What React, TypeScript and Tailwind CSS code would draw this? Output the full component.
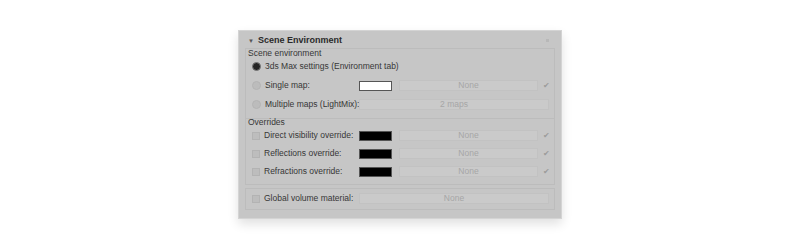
const font = { fontFamily: '"Liberation Sans", Arial, sans-serif' }

function Radio({ on }: { on?: boolean }) {
  return (
    <span
      className={`w-[9px] h-[9px] rounded-full shrink-0 border ${
        on ? 'bg-[#262626] border-[#7a7a7a]' : 'bg-[#bcbcbc] border-[#b4b4b4]'
      }`}
    />
  )
}

function Check() {
  return <span className="w-[8px] h-[8px] shrink-0 bg-[#bdbdbd] border border-[#b3b3b3]" />
}

function MapButton({ label, wide }: { label: string; wide?: boolean }) {
  return (
    <div
      className={`h-[11px] flex items-center justify-center bg-[#cacaca] border border-[#c2c2c2] text-[#a6a6a6] ${
        wide ? 'w-[190px]' : 'w-[139px]'
      }`}
    >
      {label}
    </div>
  )
}

function Tick() {
  return <span className="ml-[5px] text-[8px] text-[#9c9c9c] leading-none">✔</span>
}

function Row({
  control,
  label,
  swatch,
  button,
  wide,
  tall,
}: {
  control: React.ReactNode
  label: string
  swatch?: 'white' | 'black'
  button: string
  wide?: boolean
  tall?: boolean
}) {
  return (
    <div className={`flex items-center shrink-0 ${tall ? 'h-[20px]' : 'h-[18px]'}`}>
      <div className="w-[107px] flex items-center gap-[4px] shrink-0">
        {control}
        <span className="text-[#363636] whitespace-nowrap">{label}</span>
      </div>
      {swatch && (
        <span
          className={`w-[33px] h-[10px] mr-[7px] shrink-0 border border-[#555] ${
            swatch === 'white' ? 'bg-white' : 'bg-black'
          }`}
        />
      )}
      <MapButton label={button} wide={wide} />
      {!wide && <Tick />}
    </div>
  )
}

export default function App() {
  return (
    <div className="w-[800px] h-[248px] bg-white flex items-center justify-center" style={font}>
      <div className="w-[324px] h-[189px] bg-[#c6c6c6] border border-[#d4d4d4] shadow-[0_5px_10px_rgba(0,0,0,0.12)] text-[8.5px] leading-none flex flex-col px-[6px]">
        {/* Header */}
        <div className="h-[17px] flex items-center pt-[3px] shrink-0">
          <span className="ml-[3px] text-[6px] text-[#555]">▼</span>
          <span className="ml-[4px] font-bold text-[9px] text-[#2a2a2a]">Scene Environment</span>
          <span className="ml-auto mr-[6px] w-[3px] h-[3px] bg-[#b8b8b8]" />
        </div>

        {/* Scene environment group */}
        <div className="border border-[#bcbcbc] h-[71px] shrink-0 pl-[6px] flex flex-col">
          <div className="h-[9px] flex items-center -ml-[4px] text-[#363636] shrink-0">Scene environment</div>
          <div className="flex items-center h-[18px] gap-[4px] shrink-0">
            <Radio on />
            <span className="text-[#363636]">3ds Max settings (Environment tab)</span>
          </div>
          <Row control={<Radio />} label="Single map:" swatch="white" button="None" tall />
          <Row control={<Radio />} label="Multiple maps (LightMix):" button="2 maps" wide />
        </div>

        {/* Overrides group */}
        <div className="border border-t-0 border-[#bcbcbc] h-[66px] shrink-0 pl-[6px] flex flex-col">
          <div className="h-[8px] flex items-center -ml-[4px] text-[#363636] shrink-0">Overrides</div>
          <Row control={<Check />} label="Direct visibility override:" swatch="black" button="None" />
          <Row control={<Check />} label="Reflections override:" swatch="black" button="None" />
          <Row control={<Check />} label="Refractions override:" swatch="black" button="None" />
        </div>

        {/* Global volume group */}
        <div className="border border-[#bcbcbc] h-[22px] mt-[3px] shrink-0 pl-[6px] flex items-center">
          <Row control={<Check />} label="Global volume material:" button="None" wide />
        </div>
      </div>
    </div>
  )
}
